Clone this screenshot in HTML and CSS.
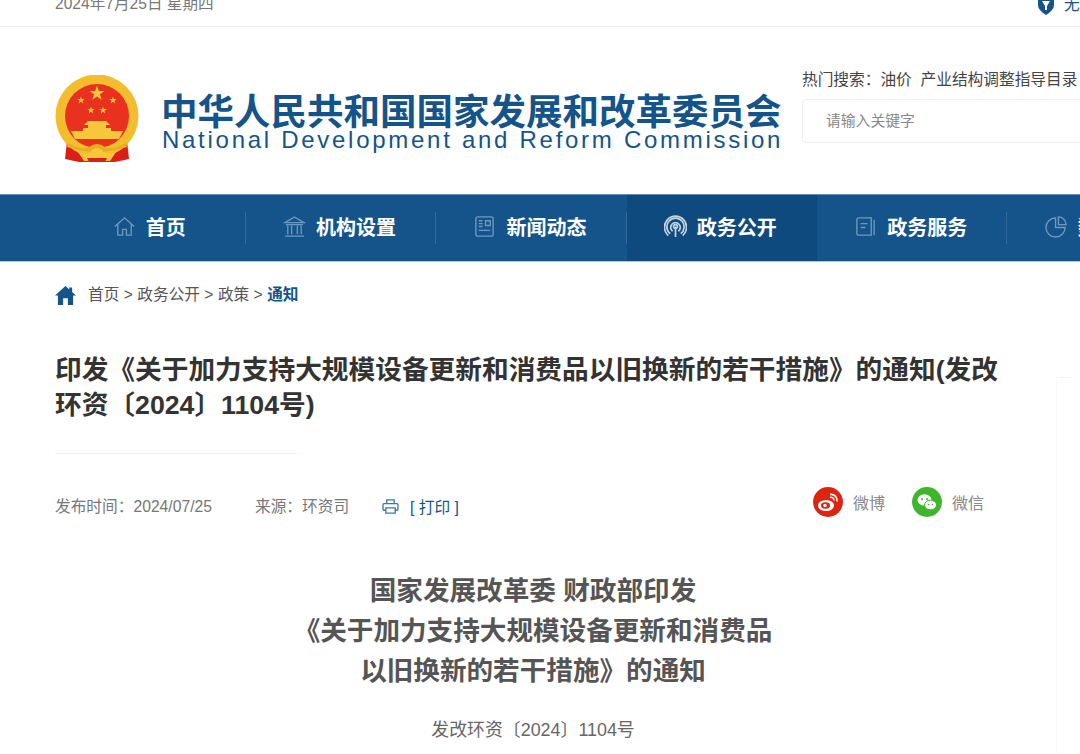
FILE: index.html
```html
<!DOCTYPE html>
<html lang="zh-CN">

<head>
    <meta charset="UTF-8">
    <meta name="viewport" content="width=device-width, initial-scale=1.0">
    <title>关于加力支持大规模设备更新和消费品以旧换新的若干措施的通知</title>
    <link rel="stylesheet" href="styles.css">
</head>

<body>
    <div class="topbar">
        <span class="date">2024年7月25日 星期四</span>
        <span class="access">
            <svg class="access-icon" viewBox="0 0 16 15">
                <path d="M0 0H16V5Q16 10 8 15Q0 10 0 5Z" fill="#14548a" />
                <path d="M4 1H12L9 6V10H7V6Z" fill="#fff" />
            </svg>
            <span>无障碍</span>
        </span>
    </div>

    <header class="header">
        <div class="brand">
            <svg class="emblem" viewBox="0 0 84 88">
                <path d="M12 66 L10 84 L24 87 H60 L74 84 L72 66Z" fill="#dc1f16" />
                <circle cx="42" cy="41" r="41.5" fill="#f2bd2f" />
                <circle cx="42" cy="41" r="32" fill="#e8321f" />
                <path d="M42 10.500l1.800 5.400h5.700l-4.600 3.400 1.800 5.500-4.700-3.400-4.700 3.400 1.800-5.500-4.600-3.400h5.700z" fill="#f7c63a" />
                <path d="M26 21.500l.9 2.600h2.800l-2.300 1.700.9 2.700-2.300-1.700-2.300 1.700.9-2.700-2.300-1.700h2.800z" fill="#f7c63a" />
                <path d="M58 21.500l.9 2.600h2.800l-2.300 1.700.9 2.700-2.300-1.700-2.300 1.700.9-2.700-2.300-1.700h2.800z" fill="#f7c63a" />
                <path d="M36 31.500l.9 2.600h2.800l-2.300 1.700.9 2.700-2.300-1.700-2.300 1.700.9-2.700-2.300-1.700h2.800z" fill="#f7c63a" />
                <path d="M48 31.500l.9 2.600h2.800l-2.300 1.700.9 2.700-2.300-1.700-2.300 1.700.9-2.700-2.300-1.700h2.800z" fill="#f7c63a" />
                <path d="M33 46H51L55 50H51V53H56V56H28V53H33V50H29Z" fill="#f7c63a" />
                <path d="M16 56H68L64 64H20Z" fill="#f7c63a" />
                <path d="M13 68 Q28 76 34 72 Q42 66 50 72 Q56 76 71 68 L72 72 Q42 82 12 72Z" fill="#e8ae22" />
                <path d="M23 77 Q34 81 37 75 Q42 71 47 75 Q50 81 61 77 L55 86 H29Z" fill="#f7c63a" />
                <path d="M32 83H52L50 87H34Z" fill="#dc1f16" />
            </svg>
            <div class="brand-text">
                <div class="brand-cn">中华人民共和国国家发展和改革委员会</div>
                <div class="brand-en">National Development and Reform Commission</div>
            </div>
        </div>
        <div class="search">
            <div class="hot">热门搜索：油价&nbsp;&nbsp;产业结构调整指导目录</div>
            <div class="search-box">请输入关键字</div>
        </div>
    </header>

    <nav class="nav">
        <a class="nav-item">
            <svg class="nav-icon" viewBox="0 0 24 24">
                <path d="M2 12 12 3 22 12M5 10V21H10V15H14V21H19V10" />
            </svg>
            首页
        </a>
        <a class="nav-item">
            <svg class="nav-icon" viewBox="0 0 24 24">
                <path d="M2 8 12 2 22 8ZM5 11V20M9 11V20M15 11V20M19 11V20M2 22H22M3 10H21" />
            </svg>
            机构设置
        </a>
        <a class="nav-item">
            <svg class="nav-icon" viewBox="0 0 24 24">
                <path d="M5 2H19Q21 2 21 4V20Q21 22 19 22H5Q3 22 3 20V4Q3 2 5 2ZM13 6H18V11H13ZM6 6H10M6 9H10M6 12H10M6 16H18" />
            </svg>
            新闻动态
        </a>
        <a class="nav-item active">
            <svg class="nav-icon nav-icon-light" viewBox="0 0 24 24">
                <path d="M12 12V23M9 17A5 5 0 1 1 15 17M6.500 19.500A9 9 0 1 1 17.500 19.500M4.500 21.500A11.500 11.500 0 1 1 19.500 21.500" />
                <circle cx="12" cy="12" r="2" />
            </svg>
            政务公开
        </a>
        <a class="nav-item">
            <svg class="nav-icon" viewBox="0 0 24 24">
                <path d="M5 3H18V21H5Q3 21 3 19V5Q3 3 5 3ZM21 5V21M7 9H14M7 13H12" />
            </svg>
            政务服务
        </a>
        <a class="nav-item">
            <svg class="nav-icon" viewBox="0 0 24 24">
                <path d="M11 3A10 10 0 1 0 21 13H11ZM14 2A8 8 0 0 1 22 10H14Z" />
            </svg>
            数据发布
        </a>
    </nav>

    <div class="crumb">
        <svg class="crumb-icon" viewBox="0 0 22 20">
            <path d="M11 0 15 3.600V1.500H18V6.300L22 10H19V20H13.500V13H8.500V20H3V10H0Z" fill="#14548a" />
        </svg>
        <span>首页 &gt; 政务公开 &gt; 政策 &gt; <b>通知</b></span>
    </div>

    <main class="article">
        <h1>印发《关于加力支持大规模设备更新和消费品以旧换新的若干措施》的通知(发改环资〔2024〕1104号)</h1>
        <div class="title-rule"></div>
        <div class="meta">
            <span class="meta-time">发布时间：2024/07/25</span>
            <span class="meta-source">来源：环资司</span>
            <span class="print">
                <svg class="print-icon" viewBox="0 0 18 16">
                    <path d="M5 5V1H13V5M4 12H2Q1 12 1 11V6Q1 5 2 5H16Q17 5 17 6V11Q17 12 16 12H14M4 9.500H14V15H4Z" />
                </svg>
                [ 打印 ]
            </span>
            <span class="share">
                <span class="share-item">
                    <svg class="share-icon" viewBox="0 0 30 30">
                        <circle cx="15" cy="15" r="15" fill="#dc2412" />
                        <ellipse cx="13" cy="18.500" rx="8" ry="5.500" fill="#fff" />
                        <ellipse cx="12.500" cy="18.500" rx="4.500" ry="3.200" fill="#dc2412" />
                        <circle cx="12" cy="18.500" r="1.700" fill="#fff" />
                        <path d="M17 7.500A6 6 0 0 1 24 14.500M17 10.500A3 3 0 0 1 21 13.500" fill="none" stroke="#fff" stroke-width="1.600" />
                    </svg>
                    微博
                </span>
                <span class="share-item">
                    <svg class="share-icon" viewBox="0 0 30 30">
                        <circle cx="15" cy="15" r="15" fill="#3fb52c" />
                        <ellipse cx="12.500" cy="13" rx="7" ry="5.800" fill="#fff" />
                        <ellipse cx="18.500" cy="18" rx="6" ry="4.800" fill="#fff" stroke="#3fb52c" />
                        <circle cx="10" cy="12" r="1" fill="#3fb52c" />
                        <circle cx="15" cy="12" r="1" fill="#3fb52c" />
                        <circle cx="16.500" cy="17.500" r=".8" fill="#3fb52c" />
                        <circle cx="20.500" cy="17.500" r=".8" fill="#3fb52c" />
                    </svg>
                    微信
                </span>
            </span>
        </div>
        <div class="doc-title">
            <p>国家发展改革委 财政部印发</p>
            <p>《关于加力支持大规模设备更新和消费品</p>
            <p>以旧换新的若干措施》的通知</p>
        </div>
        <p class="doc-no">发改环资〔2024〕1104号</p>
    </main>

    <div class="side-panel"></div>
</body>

</html>
```

FILE: styles.css
```css
html,
body {
    height: 754px;
    overflow: hidden;
}

body {
    margin: 0;
    background: #fff;
    color: #333;
    font-family: "Liberation Sans", "Noto Sans CJK SC", sans-serif;
}

.topbar {
    height: 26px;
    border-bottom: 1px solid #eee;
    display: flex;
    justify-content: space-between;
    align-items: flex-start;
    padding-left: 55px;
    font-size: 15.6px;
    line-height: 18px;
    color: #777;
    overflow: hidden;
}

.date {
    margin-top: -5px;
}

.access {
    display: flex;
    align-items: flex-start;
    gap: 10px;
    width: 42px;
    flex-shrink: 0;
    white-space: nowrap;
    overflow: hidden;
    color: #14548a;
    margin-top: -4px;
}

.access-icon {
    width: 16px;
    height: 15px;
    flex-shrink: 0;
    margin-top: 4px;
}

.header {
    height: 167px;
    display: flex;
    justify-content: space-between;
    padding-left: 55px;
}

.brand {
    display: flex;
    align-items: flex-start;
    padding-top: 48px;
}

.emblem {
    width: 84px;
    height: 88px;
    margin-right: 22px;
}

.brand-text {
    padding-top: 16px;
    color: #14548a;
}

.brand-cn {
    font-size: 36.5px;
    line-height: 32px;
    font-weight: 700;
    white-space: nowrap;
    margin-top: 6px;
}

.brand-en {
    font-size: 24px;
    line-height: 22px;
    letter-spacing: 2.72px;
    white-space: nowrap;
    margin-left: 1px;
}

.search {
    width: 278px;
    flex-shrink: 0;
    padding-top: 42px;
    overflow: hidden;
}

.hot {
    font-size: 15.7px;
    line-height: 22px;
    white-space: nowrap;
    color: #444;
}

.search-box {
    margin-top: 8px;
    height: 42px;
    width: 320px;
    border: 1px solid #eee;
    border-radius: 4px;
    padding-left: 23px;
    font-size: 14.8px;
    line-height: 42px;
    color: #888;
}

.nav {
    height: 68px;
    background: #14548a;
    border-top: 1px solid #5f8fb8;
    border-bottom: 1px solid #a9c8e4;
    box-sizing: border-box;
    display: flex;
    padding-left: 55.5px;
    overflow: hidden;
}

.nav-item {
    flex: 0 0 190.4px;
    box-sizing: border-box;
    display: flex;
    align-items: center;
    justify-content: center;
    gap: 10px;
    padding: 0 3px 3px 0;
    color: #fff;
    font-size: 20px;
    font-weight: 700;
    white-space: nowrap;
    position: relative;
}

.nav-item::after {
    content: "";
    position: absolute;
    right: 0;
    top: 17px;
    height: 32px;
    width: 1px;
    background: #2f6a9b;
}

.nav-item.active {
    background: #0e4a7e;
}

.nav-item.active::after {
    display: none;
}

.nav-icon {
    width: 23px;
    height: 23px;
    fill: none;
    stroke: #6f9abd;
    stroke-width: 1.4;
}

.nav-icon-light {
    stroke: #c4d3df;
    stroke-width: 1.8;
}

.crumb {
    display: flex;
    align-items: center;
    gap: 12px;
    padding: 23px 0 0 55px;
    font-size: 15.7px;
    line-height: 20px;
    color: #555;
}

.crumb-icon {
    width: 21px;
    height: 19px;
}

.crumb b {
    color: #14548a;
}

.article {
    padding: 0 60px 0 55px;
}

h1 {
    margin: 48px 0 0;
    font-size: 26.7px;
    line-height: 35px;
    font-weight: 700;
    color: #333;
}

.title-rule {
    width: 956px;
    height: 1px;
    margin-top: 30px;
    background: #fcfcfc;
}

.title-rule::before {
    content: "";
    display: block;
    width: 242px;
    height: 1px;
    background: #f3f3f3;
}

.meta {
    display: flex;
    align-items: center;
    height: 40px;
    margin-top: 31px;
    padding-right: 36px;
    font-size: 15.7px;
    color: #777;
}

.meta-time {
    width: 200px;
}

.meta-source {
    width: 127px;
}

.print {
    display: flex;
    align-items: center;
    gap: 11px;
    color: #14548a;
    padding-top: 2px;
}

.print-icon {
    width: 17px;
    height: 15px;
    fill: none;
    stroke: #3f77a6;
    stroke-width: 1.4;
}

.share {
    margin-left: auto;
    display: flex;
    gap: 27px;
    margin-bottom: 6px;
}

.share-item {
    display: flex;
    align-items: center;
    gap: 10px;
    font-size: 16px;
    color: #888;
}

.share-icon {
    width: 30px;
    height: 30px;
}

.doc-title {
    margin-top: 46px;
    padding-right: 9px;
    text-align: center;
    font-size: 26.6px;
    line-height: 40px;
    font-weight: 700;
    color: #555;
}

.doc-title p {
    margin: 0;
}

.doc-no {
    margin: 27px 0 0;
    padding-right: 9px;
    text-align: center;
    font-size: 17.9px;
    line-height: 24px;
    color: #666;
}

/* faint edge of the floating panel on the right */
.side-panel {
    position: absolute;
    left: 1056px;
    top: 377px;
    width: 16px;
    height: 377px;
    border-left: 1px solid #fafafa;
    border-top: 1px solid #f5f5f5;
}
```
